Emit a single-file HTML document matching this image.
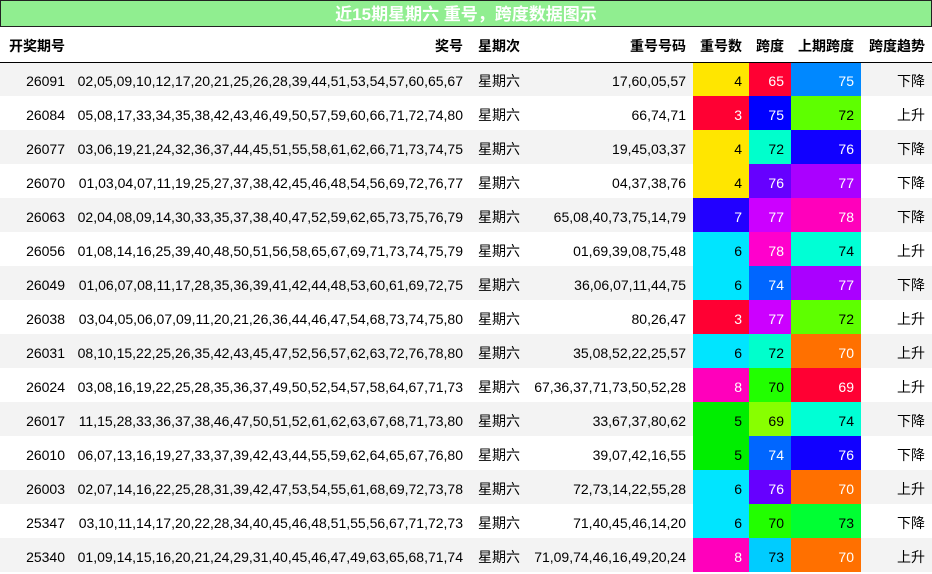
<!DOCTYPE html>
<html><head><meta charset="utf-8"><style>
body{margin:0;width:932px;height:574px;overflow:hidden;background:#fff;font-family:"Liberation Sans","Noto Sans CJK SC",sans-serif;font-size:14px;color:#000}
.title{height:25px;background:#90ee90;border:1px solid #222;box-sizing:content-box;width:930px;color:#fff;font-weight:bold;font-size:17px;text-align:center;line-height:27px}
table{border-collapse:collapse;table-layout:fixed;width:932px}
td,th{padding:0 7px 0 0;text-align:right;white-space:nowrap;overflow:hidden}
th{height:35px;font-weight:bold;border-bottom:1px solid #000;padding-top:3px;box-sizing:border-box}
td{height:34px;padding-top:3px;box-sizing:border-box}
tr.o td{background:#f3f3f3}
.l{text-align:left;padding-left:8px}
.w{color:#fff}
</style></head><body>
<div class="title">近15期星期六 重号，跨度数据图示</div>
<table>
<colgroup><col style="width:72px"><col style="width:398px"><col style="width:58px"><col style="width:165px"><col style="width:56px"><col style="width:42px"><col style="width:70px"><col style="width:71px"></colgroup>
<tr><th>开奖期号</th><th>奖号</th><th class="l">星期次</th><th>重号号码</th><th>重号数</th><th>跨度</th><th>上期跨度</th><th>跨度趋势</th></tr>
<tr class="o"><td>26091</td><td>02,05,09,10,12,17,20,21,25,26,28,39,44,51,53,54,57,60,65,67</td><td class="l">星期六</td><td>17,60,05,57</td><td style="background:#ffe600!important">4</td><td class="w" style="background:#ff0033!important">65</td><td class="w" style="background:#0088ff!important">75</td><td>下降</td></tr>
<tr><td>26084</td><td>05,08,17,33,34,35,38,42,43,46,49,50,57,59,60,66,71,72,74,80</td><td class="l">星期六</td><td>66,74,71</td><td class="w" style="background:#ff0033">3</td><td class="w" style="background:#0000ff">75</td><td style="background:#5eff00">72</td><td>上升</td></tr>
<tr class="o"><td>26077</td><td>03,06,19,21,24,32,36,37,44,45,51,55,58,61,62,66,71,73,74,75</td><td class="l">星期六</td><td>19,45,03,37</td><td style="background:#ffe600!important">4</td><td style="background:#00ffcc!important">72</td><td class="w" style="background:#1100ff!important">76</td><td>下降</td></tr>
<tr><td>26070</td><td>01,03,04,07,11,19,25,27,37,38,42,45,46,48,54,56,69,72,76,77</td><td class="l">星期六</td><td>04,37,38,76</td><td style="background:#ffe600">4</td><td class="w" style="background:#6600ff">76</td><td class="w" style="background:#aa00ff">77</td><td>下降</td></tr>
<tr class="o"><td>26063</td><td>02,04,08,09,14,30,33,35,37,38,40,47,52,59,62,65,73,75,76,79</td><td class="l">星期六</td><td>65,08,40,73,75,14,79</td><td class="w" style="background:#2200ff!important">7</td><td class="w" style="background:#cc00ff!important">77</td><td class="w" style="background:#ff00bb!important">78</td><td>下降</td></tr>
<tr><td>26056</td><td>01,08,14,16,25,39,40,48,50,51,56,58,65,67,69,71,73,74,75,79</td><td class="l">星期六</td><td>01,69,39,08,75,48</td><td style="background:#00e5ff">6</td><td class="w" style="background:#ff00cc">78</td><td style="background:#00ffd5">74</td><td>上升</td></tr>
<tr class="o"><td>26049</td><td>01,06,07,08,11,17,28,35,36,39,41,42,44,48,53,60,61,69,72,75</td><td class="l">星期六</td><td>36,06,07,11,44,75</td><td style="background:#00e5ff!important">6</td><td class="w" style="background:#0066ff!important">74</td><td class="w" style="background:#aa00ff!important">77</td><td>下降</td></tr>
<tr><td>26038</td><td>03,04,05,06,07,09,11,20,21,26,36,44,46,47,54,68,73,74,75,80</td><td class="l">星期六</td><td>80,26,47</td><td class="w" style="background:#ff0033">3</td><td class="w" style="background:#cc00ff">77</td><td style="background:#5eff00">72</td><td>上升</td></tr>
<tr class="o"><td>26031</td><td>08,10,15,22,25,26,35,42,43,45,47,52,56,57,62,63,72,76,78,80</td><td class="l">星期六</td><td>35,08,52,22,25,57</td><td style="background:#00e5ff!important">6</td><td style="background:#00ffcc!important">72</td><td class="w" style="background:#ff7000!important">70</td><td>上升</td></tr>
<tr><td>26024</td><td>03,08,16,19,22,25,28,35,36,37,49,50,52,54,57,58,64,67,71,73</td><td class="l">星期六</td><td>67,36,37,71,73,50,52,28</td><td class="w" style="background:#ff00bb">8</td><td style="background:#22ff00">70</td><td class="w" style="background:#ff0033">69</td><td>上升</td></tr>
<tr class="o"><td>26017</td><td>11,15,28,33,36,37,38,46,47,50,51,52,61,62,63,67,68,71,73,80</td><td class="l">星期六</td><td>33,67,37,80,62</td><td style="background:#00ee00!important">5</td><td style="background:#88ff00!important">69</td><td style="background:#00ffd5!important">74</td><td>下降</td></tr>
<tr><td>26010</td><td>06,07,13,16,19,27,33,37,39,42,43,44,55,59,62,64,65,67,76,80</td><td class="l">星期六</td><td>39,07,42,16,55</td><td style="background:#00ee00">5</td><td class="w" style="background:#0066ff">74</td><td class="w" style="background:#1100ff">76</td><td>下降</td></tr>
<tr class="o"><td>26003</td><td>02,07,14,16,22,25,28,31,39,42,47,53,54,55,61,68,69,72,73,78</td><td class="l">星期六</td><td>72,73,14,22,55,28</td><td style="background:#00e5ff!important">6</td><td class="w" style="background:#6600ff!important">76</td><td class="w" style="background:#ff7000!important">70</td><td>上升</td></tr>
<tr><td>25347</td><td>03,10,11,14,17,20,22,28,34,40,45,46,48,51,55,56,67,71,72,73</td><td class="l">星期六</td><td>71,40,45,46,14,20</td><td style="background:#00e5ff">6</td><td style="background:#22ff00">70</td><td style="background:#00ff33">73</td><td>下降</td></tr>
<tr class="o"><td>25340</td><td>01,09,14,15,16,20,21,24,29,31,40,45,46,47,49,63,65,68,71,74</td><td class="l">星期六</td><td>71,09,74,46,16,49,20,24</td><td class="w" style="background:#ff00bb!important">8</td><td style="background:#00ccff!important">73</td><td class="w" style="background:#ff7000!important">70</td><td>上升</td></tr>
</table>
</body></html>
